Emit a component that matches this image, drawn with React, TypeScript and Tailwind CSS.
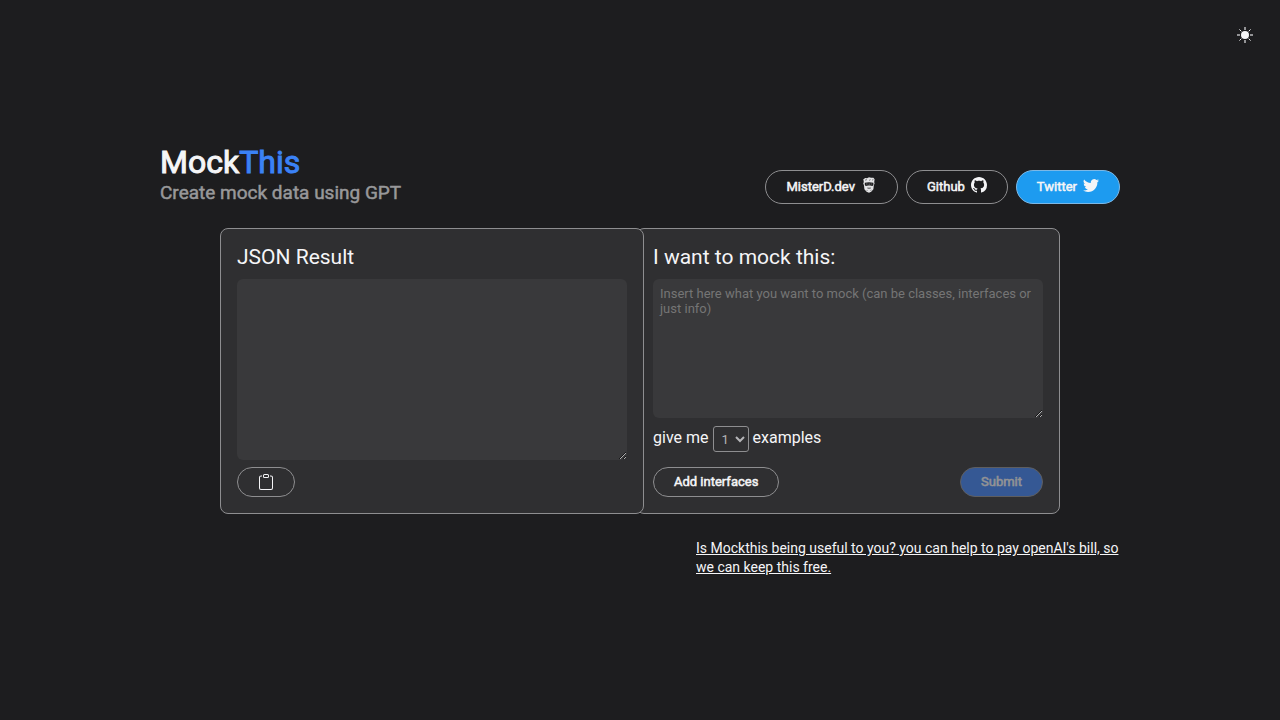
import React, { useState } from "react";
import { BsClipboard, BsGithub, BsTwitter } from "react-icons/bs";

/* ── Shared class lists ── */
const pillClass =
  "flex items-center rounded-full border border-[#8e8e90] px-5 text-[13px] leading-4";
const navLinkClass = "flex h-[34px] items-center gap-[6px] rounded-full border px-5 text-[13px] leading-4";
const strongText = "[-webkit-text-stroke:0.5px_currentColor]";
const cardClass =
  "flex min-w-0 flex-1 flex-col rounded-lg border border-[#8e8e90] bg-[#2f2f31] p-4";
const areaClass =
  "block w-full resize rounded-md bg-[#39393b] px-[7px] py-[7px] text-[13px] leading-[15px] text-[#f5f5f7] outline-none placeholder:text-[#757575]";

const exampleCounts = [1, 2, 3, 4, 5];

function SunIcon() {
  return (
    <svg width="16" height="16" viewBox="0 0 16 16" fill="none" stroke="currentColor">
      <circle cx="8" cy="8" r="4" fill="currentColor" stroke="none" />
      <path strokeWidth="2" opacity=".55" d="M8 0v3M8 13v3M0 8h3M13 8h3" />
      <path
        strokeWidth="1"
        strokeLinecap="round"
        d="M2.7 2.7l1.4 1.4M11.9 11.9l1.4 1.4M2.7 13.3l1.4-1.4M11.9 4.1l1.4-1.4"
      />
    </svg>
  );
}

function BeardedFaceIcon() {
  return (
    <svg width="16" height="16" viewBox="0 0 16 16">
      <path
        fill="#e4e4e6"
        d="M2.6 3.4 2.2 2.4 4.2 1 6 1.2 8 .3l2 .5 2.4 0 1.2 1.4-.4 3 .4 1-.8 2.2-.4 3.8-2.2 2.6L8 15.8l-2.4-1-2.2-2.6L3 8.4l-.8-2.2.6-1z"
      />
      <path fill="#1d1d1f" d="M3.8 5.8 8 5.2l4.4.6v2.2l-1 1-2.2-.4H7.2l-2.4.4-1-1z" />
      <path fill="#1d1d1f" d="M6 10.8h4.2l-.8.8H6.8z" />
      <path stroke="#1d1d1f" strokeWidth=".5" d="M4 3.2 6 2.6M8 3.4l1.6-.8M11 3.2l1.4-.6M5.6 13l.8.8M10.4 12.8l-.8 1" />
      <path stroke="#9a9a9c" strokeWidth=".6" d="M5 7h1.6M9.6 7h1.6M8.2 6.4v1.8" />
    </svg>
  );
}

export default function App() {
  const [result, setResult] = useState("");
  const [source, setSource] = useState("");
  const [count, setCount] = useState(1);

  return (
    <div className="relative flex min-h-screen flex-col items-center justify-center bg-[#1d1d1f] font-['Roboto',sans-serif] text-[#f5f5f7] scheme-dark">
      <button type="button" aria-label="Toggle theme" className="absolute top-[27px] right-[27px]">
        <SunIcon />
      </button>

      <main className="w-full max-w-[960px]">
        {/* ── Heading and links ── */}
        <header className="flex items-end justify-between">
          <div>
            <h1 className="mb-px text-[32px] leading-[38px] [-webkit-text-stroke:1px_currentColor]">
              Mock<span className="text-[#3b82f6]">This</span>
            </h1>
            <h2 className={`text-[19px] leading-[22px] text-[#98989a] ${strongText}`}>
              Create mock data using GPT
            </h2>
          </div>
          <nav className="flex gap-2">
            <a href="#misterd" className={`${navLinkClass} border-[#8e8e90]`}>
              <span className={strongText}>MisterD.dev</span>
              <span className="pb-1">
                <BeardedFaceIcon />
              </span>
            </a>
            <a href="#github" className={`${navLinkClass} border-[#8e8e90]`}>
              <span className={strongText}>Github</span>
              <span className="pb-1">
                <BsGithub size={16} />
              </span>
            </a>
            <a href="#twitter" className={`${navLinkClass} border-[#7cb8e6] bg-[#1d9bf0]`}>
              <span className={strongText}>Twitter</span>
              <span className="pb-1">
                <BsTwitter size={16} />
              </span>
            </a>
          </nav>
        </header>

        {/* ── Result and request cards ── */}
        <div className="mx-auto mt-6 flex max-w-[840px]">
          <section className={`${cardClass} relative z-10 -mr-1`}>
            <label htmlFor="result" className="mb-[9px] text-[21px] leading-[25px]">
              JSON Result
            </label>
            <textarea
              id="result"
              className={`${areaClass} flex-1`}
              value={result}
              onChange={(e) => setResult(e.target.value)}
            />
            <button
              type="button"
              aria-label="Copy result"
              className={`${pillClass} mt-[7px] h-[30px] self-start`}
              onClick={() => navigator.clipboard.writeText(result)}
            >
              <BsClipboard size={16} />
            </button>
          </section>

          <form className={`${cardClass} -ml-1`} onSubmit={(e) => e.preventDefault()}>
            <label htmlFor="source" className="mb-[9px] text-[21px] leading-[25px]">
              I want to mock this:
            </label>
            <textarea
              id="source"
              className={`${areaClass} h-[139px]`}
              placeholder="Insert here what you want to mock (can be classes, interfaces or just info)"
              value={source}
              onChange={(e) => setSource(e.target.value)}
            />
            <label className="mt-2 flex items-start gap-1 text-base leading-6">
              give me
              <select
                className="h-[26px] w-9 rounded-[3px] border border-[#8e8e90] bg-[#2f2f31] pl-1 text-[13px] text-[#b5b5b8]"
                value={count}
                onChange={(e) => setCount(Number(e.target.value))}
              >
                {exampleCounts.map((n) => (
                  <option key={n} value={n}>
                    {n}
                  </option>
                ))}
              </select>
              examples
            </label>
            <div className="mt-[15px] flex justify-between">
              <button type="button" className={`${pillClass} h-[30px]`}>
                <span className={strongText}>Add interfaces</span>
              </button>
              <button
                type="submit"
                disabled
                className={`${pillClass} h-[30px] bg-[#3b82f6] opacity-50`}
              >
                <span className={strongText}>Submit</span>
              </button>
            </div>
          </form>
        </div>

        {/* ── Donation link ── */}
        <footer className="mt-[25px] flex justify-end">
          <a href="#donate" className="max-w-[424px] text-[14px] leading-[19px] underline">
            Is Mockthis being useful to you? you can help to pay openAI's bill, so we can keep this
            free.
          </a>
        </footer>
      </main>
    </div>
  );
}
